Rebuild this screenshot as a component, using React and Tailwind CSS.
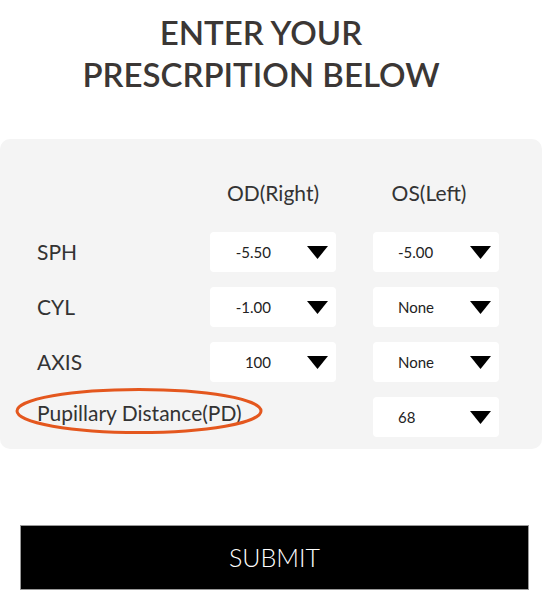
import React from 'react';

const rows = [
  { label: 'SPH', od: '-5.50', os: '-5.00' },
  { label: 'CYL', od: '-1.00', os: 'None' },
  { label: 'AXIS', od: '100', os: 'None' },
];

function Caret() {
  return (
    <svg width="21" height="13" viewBox="0 0 21 13" className="shrink-0">
      <path d="M0 0 H21 L10.5 13 Z" fill="#000" />
    </svg>
  );
}

function Select({ value, align = 'left' }) {
  return (
    <div className="h-10 w-[126px] bg-white rounded-[4px] flex items-center pr-2">
      <span
        className={`flex-1 text-[15px] text-[#222] ${
          align === 'right' ? 'text-right pr-[36px]' : 'pl-[25px]'
        }`}
      >
        {value}
      </span>
      <Caret />
    </div>
  );
}

export default function App() {
  return (
    <div className="w-[542px] h-[600px] bg-white font-['Lato','Noto_Sans',sans-serif] text-[#333]">
      {/* Title */}
      <h1 className="pt-[11px] text-center text-[33px] leading-[42px] font-semibold text-[#3b3735] pr-[20px]">
        ENTER YOUR
        <br />
        PRESCRPITION BELOW
      </h1>

      {/* Form panel */}
      <div className="mt-[44px] h-[310px] bg-[#f4f4f4] rounded-[10px] pl-[37px] pt-[42px]">
        <div className="grid grid-cols-[136px_126px_126px] gap-x-[37px] gap-y-[15px] items-center">
          <div />
          <div className="text-center text-[21px] leading-[24px] text-[#333] mb-[12px]">OD(Right)</div>
          <div className="text-center text-[21px] leading-[24px] text-[#333] mb-[12px] pr-[14px]">OS(Left)</div>

          {rows.map((r) => (
            <React.Fragment key={r.label}>
              <div className="text-[21px] text-[#333]">{r.label}</div>
              <Select value={r.od} align="right" />
              <Select value={r.os} />
            </React.Fragment>
          ))}

          <div className="relative text-[21px] text-[#333] whitespace-nowrap -mt-[8px]">
            Pupillary Distance(PD)
            <svg
              className="absolute left-[-22px] top-[-9px] overflow-visible"
              width="248"
              height="46"
              viewBox="0 0 248 46"
            >
              <ellipse cx="124" cy="23" rx="122" ry="21.5" fill="none" stroke="#e4571e" strokeWidth="3" />
            </svg>
          </div>
          <div />
          <Select value="68" />
        </div>
      </div>

      {/* Submit */}
      <div className="pl-[20px] pr-[13px] mt-[76px]">
        <button className="w-full h-[65px] bg-black border border-[#999] text-white text-[25px] font-light">
          SUBMIT
        </button>
      </div>
    </div>
  );
}
